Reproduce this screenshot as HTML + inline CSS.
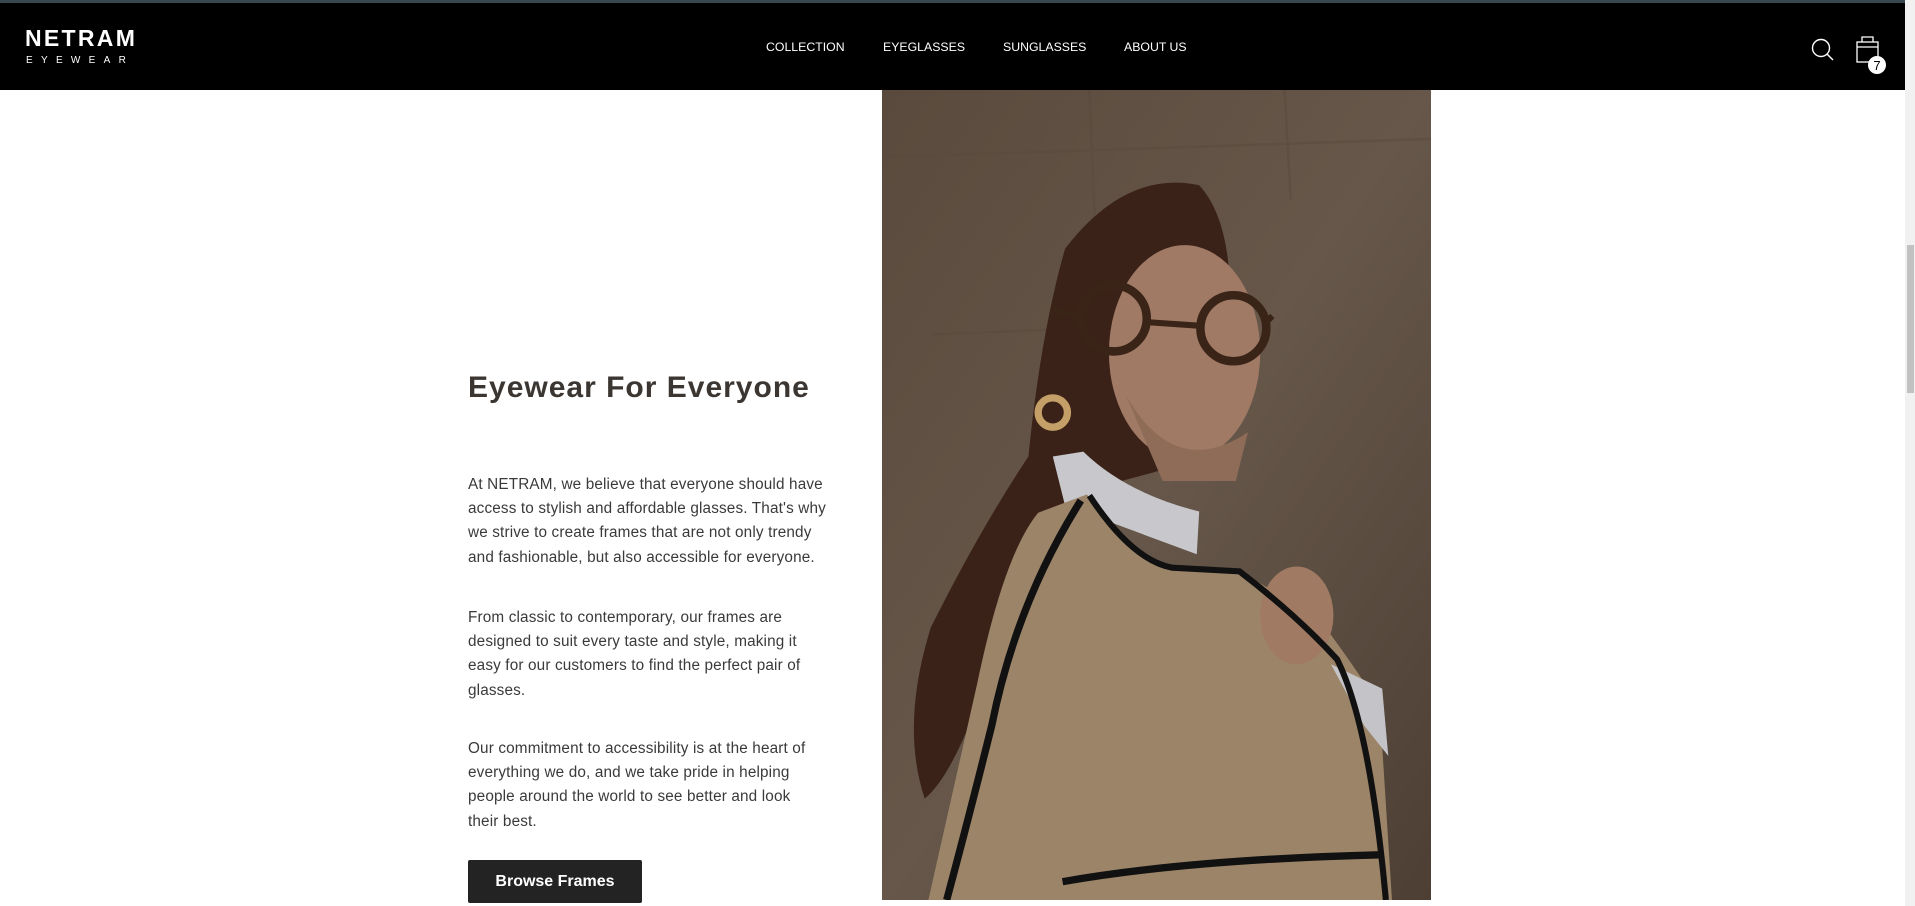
<!DOCTYPE html>
<html><head><meta charset="utf-8"><style>
*{margin:0;padding:0;box-sizing:border-box}
html,body{width:1915px;height:906px;overflow:hidden;background:#fff;font-family:"Liberation Sans",Arial,sans-serif}
.top{position:absolute;left:0;top:0;width:1905px;height:3px;background:#36474f}
header{position:absolute;left:0;top:3px;width:1905px;height:87px;background:#000;color:#fff}
.logo1{position:absolute;left:25px;top:22px;font-size:23px;font-weight:bold;letter-spacing:2.3px}
.logo2{position:absolute;left:26px;top:52px;font-size:10px;letter-spacing:8.3px}
nav a{position:absolute;top:37px;font-size:12.3px;color:#fff;text-decoration:none}
.sb{position:absolute;left:1905px;top:0;width:10px;height:906px;background:#f1f1f1}
.sb i{position:absolute;left:2px;top:245px;width:7px;height:148px;background:#c1c1c1}
h1{position:absolute;left:468px;top:371px;font-size:30px;font-weight:bold;color:#3b3632;letter-spacing:1px}
.p{position:absolute;left:468px;white-space:nowrap;font-size:15.3px;line-height:24.2px;color:#3a3a3a;letter-spacing:0.15px}
.btn{position:absolute;left:468px;top:860px;width:174px;height:43px;background:#232323;color:#fff;font-weight:bold;font-size:16px;text-align:center;line-height:43px;border-radius:2px}
.img{position:absolute;left:882px;top:90px;width:549px;height:810px}
</style></head><body>
<div class="top"></div>
<header>
<div class="logo1">NETRAM</div>
<div class="logo2">EYEWEAR</div>
<nav><a style="left:766px">COLLECTION</a><a style="left:883px">EYEGLASSES</a><a style="left:1003px">SUNGLASSES</a><a style="left:1124px">ABOUT US</a></nav>
<svg style="position:absolute;left:1810px;top:34px" width="26" height="26" viewBox="0 0 26 26"><circle cx="11" cy="11" r="8.5" fill="none" stroke="#fff" stroke-width="1.4"/><line x1="17" y1="17" x2="23" y2="23" stroke="#fff" stroke-width="1.4"/></svg>
<svg style="position:absolute;left:1855px;top:30px" width="40" height="42" viewBox="0 0 40 42"><rect x="2" y="9" width="21" height="20" fill="none" stroke="#fff" stroke-width="1.3"/><line x1="2" y1="14" x2="23" y2="14" stroke="#fff" stroke-width="1.3"/><path d="M7 9V4h11v5" fill="none" stroke="#fff" stroke-width="1.3"/><circle cx="22" cy="32" r="9" fill="#fff"/><text x="22" y="37" font-size="13" font-family="Liberation Sans" text-anchor="middle" fill="#000">7</text></svg>
</header>
<div class="sb"><i></i></div>
<h1>Eyewear For Everyone</h1>
<div class="p" style="top:473px">At NETRAM, we believe that everyone should have<br>access to stylish and affordable glasses. That's why<br>we strive to create frames that are not only trendy<br>and fashionable, but also accessible for everyone.</div>
<div class="p" style="top:606px">From classic to contemporary, our frames are<br>designed to suit every taste and style, making it<br>easy for our customers to find the perfect pair of<br>glasses.</div>
<div class="p" style="top:737px">Our commitment to accessibility is at the heart of<br>everything we do, and we take pride in helping<br>people around the world to see better and look<br>their best.</div>
<div class="btn">Browse Frames</div>
<svg class="img" viewBox="0 0 450 663" preserveAspectRatio="none">
<defs><linearGradient id="bg" x1="0" y1="0" x2="1" y2="1"><stop offset="0" stop-color="#5a4a3d"/><stop offset="0.5" stop-color="#66574a"/><stop offset="1" stop-color="#4d3f34"/></linearGradient></defs>
<rect width="450" height="663" fill="url(#bg)"/>
<path d="M0 55 L450 40 M170 0 L175 120 M40 200 L300 190 M330 0 L335 90" stroke="#5a4a3e" stroke-width="2" fill="none" opacity=".5"/>
<path d="M150 130 Q200 65 260 78 Q290 110 285 200 L270 300 L160 330 Q120 380 90 470 Q60 560 35 580 Q15 520 40 440 Q80 360 120 300 Q130 200 150 130Z" fill="#3b2218"/>
<ellipse cx="248" cy="215" rx="62" ry="88" fill="#a07a65"/>
<path d="M200 250 Q240 320 300 280 L290 320 L230 320Z" fill="#8f6c58"/>
<circle cx="190" cy="187" r="27" fill="none" stroke="#3a2418" stroke-width="7"/>
<circle cx="288" cy="195" r="27" fill="none" stroke="#3a2418" stroke-width="7"/>
<path d="M217 190 L261 193 M163 185 L140 180 M315 190 L320 185" stroke="#3a2418" stroke-width="5"/>
<circle cx="140" cy="264" r="12" fill="none" stroke="#c4a068" stroke-width="6"/>
<path d="M140 300 L165 296 Q200 330 260 345 L258 380 L150 340Z" fill="#c8c8cc"/>
<path d="M38 663 L78 486 Q100 380 128 346 L168 331 Q200 380 238 391 L293 394 Q340 420 368 446 Q400 490 408 506 L418 663Z" fill="#9c8468"/>
<ellipse cx="340" cy="430" rx="30" ry="40" fill="#a07a62"/>
<path d="M368 470 L410 490 L415 545 L395 520Z" fill="#c4c4c8"/>
<path d="M163 336 Q110 420 90 520 Q70 600 53 663" stroke="#111" stroke-width="6" fill="none"/>
<path d="M170 332 Q205 385 238 391 L293 394 Q340 430 373 466 Q400 520 413 663" stroke="#111" stroke-width="5" fill="none"/>
<path d="M148 648 Q250 630 408 626" stroke="#111" stroke-width="6" fill="none"/>
</svg>
</body></html>
